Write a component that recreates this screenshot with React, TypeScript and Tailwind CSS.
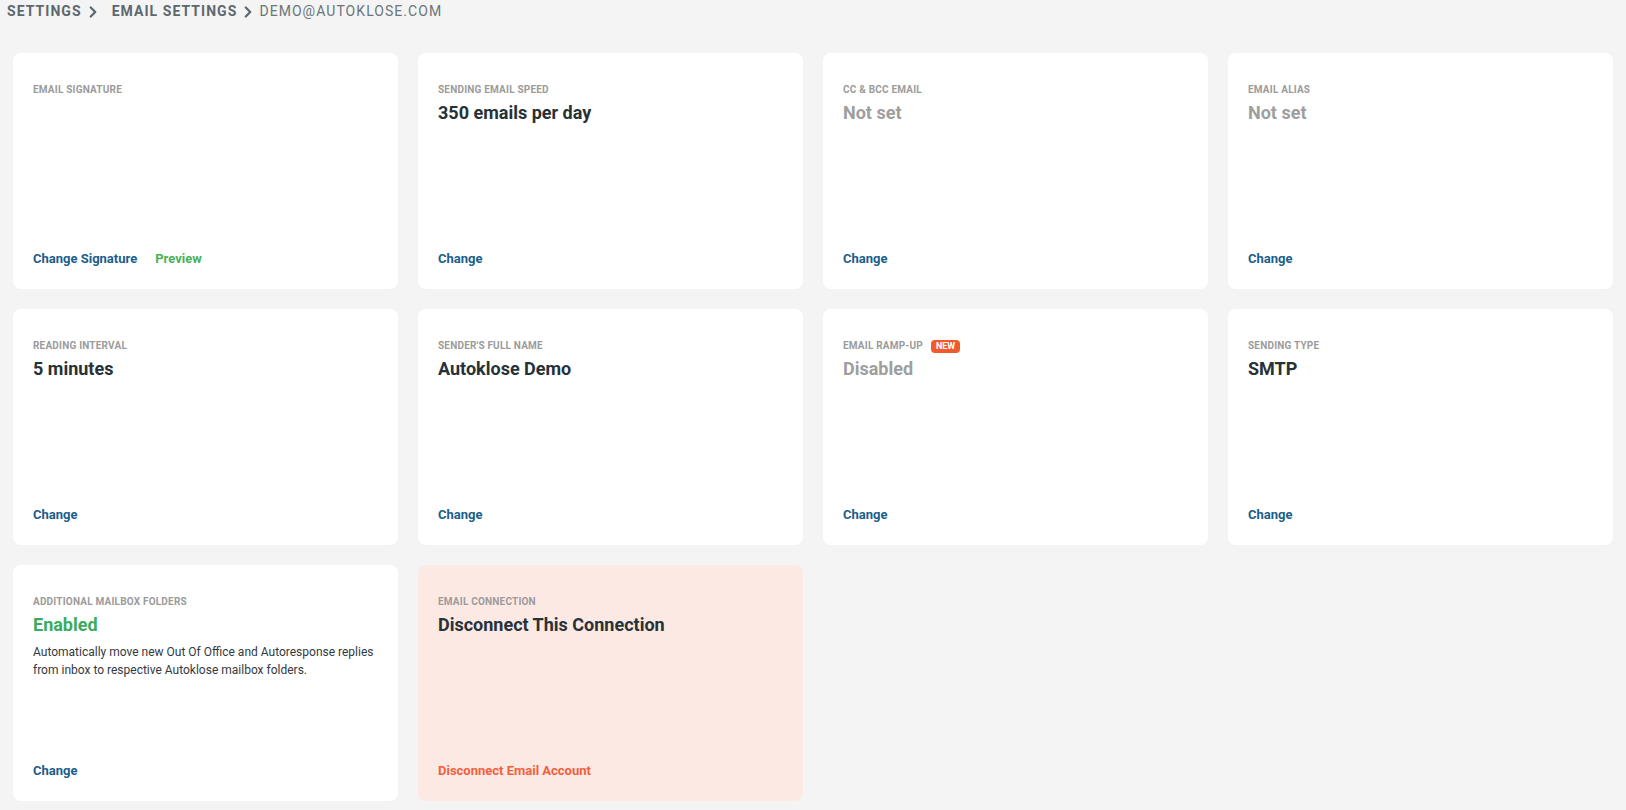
import { ChevronRight } from "lucide-react";

type Tone = "dark" | "muted" | "green";

interface SettingCard {
  label: string;
  value: string;
  tone: Tone;
  badge?: string;
  description?: string;
  links: { text: string; color: string }[];
  danger?: boolean;
}

const TONE_CLASS: Record<Tone, string> = {
  dark: "text-[#263238]",
  muted: "text-[#9e9e9e]",
  green: "text-[#3bab5e]",
};

const BLUE = "text-[#1b5e8c]";

const CARDS: SettingCard[] = [
  {
    label: "Email Signature",
    value: "",
    tone: "dark",
    links: [
      { text: "Change Signature", color: BLUE },
      { text: "Preview", color: "text-[#4caf5a]" },
    ],
  },
  { label: "Sending Email Speed", value: "350 emails per day", tone: "dark", links: [{ text: "Change", color: BLUE }] },
  { label: "CC & BCC Email", value: "Not set", tone: "muted", links: [{ text: "Change", color: BLUE }] },
  { label: "Email Alias", value: "Not set", tone: "muted", links: [{ text: "Change", color: BLUE }] },
  { label: "Reading Interval", value: "5 minutes", tone: "dark", links: [{ text: "Change", color: BLUE }] },
  { label: "Sender's Full Name", value: "Autoklose Demo", tone: "dark", links: [{ text: "Change", color: BLUE }] },
  { label: "Email Ramp-Up", value: "Disabled", tone: "muted", badge: "NEW", links: [{ text: "Change", color: BLUE }] },
  { label: "Sending Type", value: "SMTP", tone: "dark", links: [{ text: "Change", color: BLUE }] },
  {
    label: "Additional Mailbox Folders",
    value: "Enabled",
    tone: "green",
    description:
      "Automatically move new Out Of Office and Autoresponse replies from inbox to respective Autoklose mailbox folders.",
    links: [{ text: "Change", color: BLUE }],
  },
  {
    label: "Email Connection",
    value: "Disconnect This Connection",
    tone: "dark",
    danger: true,
    links: [{ text: "Disconnect Email Account", color: "text-[#f0603c]" }],
  },
];

function Card({ card }: { card: SettingCard }) {
  return (
    <div
      className={`flex flex-col rounded-lg px-5 pt-[30px] pb-[21px] ${
        card.danger ? "bg-[#fde9e4]" : "bg-white"
      }`}
    >
      <div className="flex items-center gap-2 h-[14px]">
        <span className="text-[10px] leading-[14px] font-bold uppercase tracking-[0.2px] text-[#9b9b9b]">
          {card.label}
        </span>
        {card.badge && (
          <span className="rounded-[4px] bg-[#f05a2c] px-[5px] text-[9px] leading-[13px] font-bold text-white">
            {card.badge}
          </span>
        )}
      </div>
      {card.value && (
        <div className={`mt-1 text-[18px] leading-6 font-bold ${TONE_CLASS[card.tone]}`}>{card.value}</div>
      )}
      {card.description && (
        <p className="mt-[6px] text-[12px] leading-[18px] text-[#333a3f]">{card.description}</p>
      )}
      <div className="mt-auto flex items-center gap-[18px]">
        {card.links.map((l) => (
          <button key={l.text} className={`text-[13px] leading-[18px] font-bold ${l.color}`}>
            {l.text}
          </button>
        ))}
      </div>
    </div>
  );
}

export default function App() {
  return (
    <div className="min-h-[810px] bg-[#f4f4f4] font-['Roboto',sans-serif]">
      {/* Breadcrumb */}
      <div className="flex items-center h-[22px] pl-[7px] pt-[1px] text-[14px] tracking-[1.05px] uppercase">
        <span className="font-bold text-[#5d686e]">Settings</span>
        <ChevronRight className="ml-[2px] mr-[10px] h-[18px] w-[18px] text-[#5d686e]" strokeWidth={3} />
        <span className="font-bold text-[#5d686e]">Email Settings</span>
        <ChevronRight className="ml-[2px] mr-[2px] h-[18px] w-[18px] text-[#5d686e]" strokeWidth={3} />
        <span className="text-[#6b757a]">demo@autoklose.com</span>
      </div>

      {/* Cards */}
      <div className="grid grid-cols-4 auto-rows-[236px] gap-5 px-[13px] pt-[31px] pb-[9px]">
        {CARDS.map((c) => (
          <Card key={c.label} card={c} />
        ))}
      </div>
    </div>
  );
}
